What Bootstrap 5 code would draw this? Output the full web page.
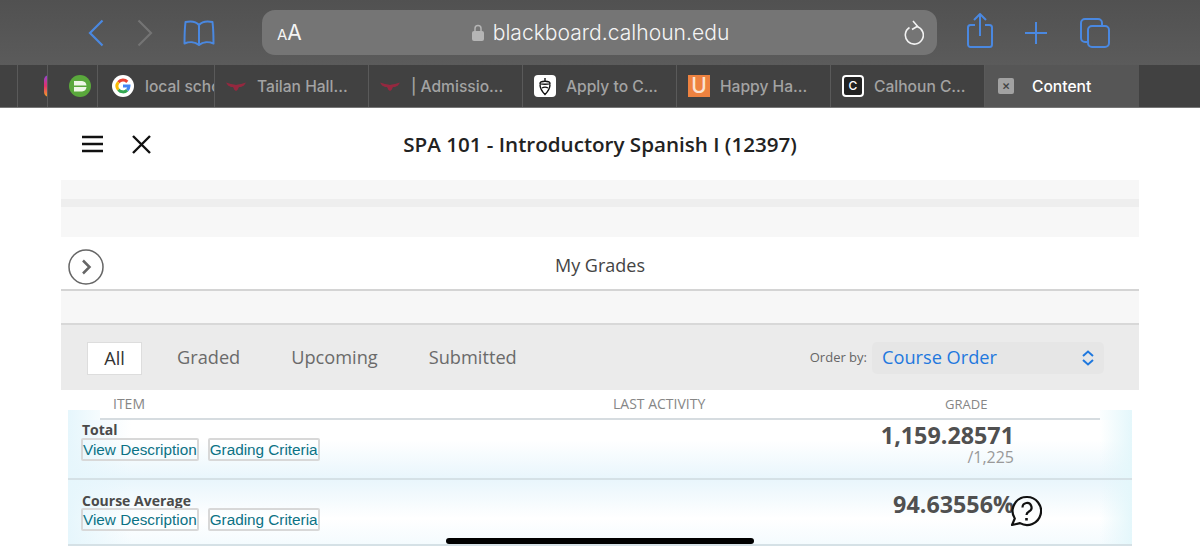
<!DOCTYPE html>
<html lang="en">

<head>
    <meta charset="UTF-8" />
    <meta name="viewport" content="width=device-width, initial-scale=1.0" />
    <title>My Grades</title>
    <link rel="stylesheet" href="https://cdn.jsdelivr.net/npm/bootstrap@5.3.0/dist/css/bootstrap.min.css" />
    <style>
        html, body {
            height: 555px;
            overflow: hidden;
        }

        body {
            position: relative;
            background: #fff;
            font-family: "Open Sans", sans-serif;
            color: #444;
        }

        /* safari chrome */
        .top-bar {
            height: 65px;
            padding-left: 88px;
            background: linear-gradient(#515151, #5b5b5b);
            font-family: Inter, Roboto, sans-serif;
        }

        .chev-icon { width: 16px; height: 28px; }
        .chev-next { margin-left: 33px; }
        .book-icon { width: 32px; height: 26px; margin-left: 30px; }
        .share-icon { width: 26px; height: 37px; margin-left: 30px; margin-bottom: 5px; }
        .plus-icon { width: 22px; height: 22px; margin-left: 32px; }
        .copies-icon { width: 30px; height: 30px; margin-left: 33px; }

        .addr-pill {
            width: 675px;
            height: 45px;
            margin-left: 47px;
            padding: 1px 13px 0 15px;
            border-radius: 13px;
            background: #757575;
            color: #f4f4f4;
        }

        .addr-side { flex: 1 1 0; }
        .aa-small { font-size: 15px; }
        .aa-big { font-size: 21px; }
        .domain-text { font-size: 21.1px; font-weight: 300; margin-left: 1px; }

        .tab-strip {
            height: 43px;
            padding-left: 17px;
            background: #414141;
            border-bottom: 1px solid #777;
            font-family: Inter, Roboto, sans-serif;
            font-size: 15.6px;
            font-weight: 500;
            color: #a3a3a3;
        }

        .tab-item {
            width: 154px;
            height: 42px;
            padding-left: 11px;
            gap: 10px;
            border-right: 1px solid #5a5a5a;
            white-space: nowrap;
            overflow: hidden;
        }

        .tab-item span { padding-top: 1px; }
        .tab-insta { width: 31px; padding-left: 26px; border-left: 1px solid #5a5a5a; }
        .tab-pin { width: 50px; padding-left: 21px; }
        .tab-google { width: 117px; padding-left: 14px; gap: 11px; }
        .tab-on { background: #565656; color: #fff; border-right: 0; padding-left: 13px; gap: 18px; }

        .fav-icon { width: 22px; height: 22px; flex: none; }
        .fav-wide { width: 20px; margin-right: 1px; }

        .fav-u {
            background: #ee8240;
            color: #fbe3d2;
            font-size: 21px;
            line-height: 22px;
            text-align: center;
        }

        .fav-c {
            background: #222;
            border: 2px solid #fff;
            border-radius: 4px;
            color: #fff;
            font-size: 12px;
            line-height: 18px;
            text-align: center;
        }

        .fav-x {
            width: 16px;
            height: 16px;
            background: #a2a2a2;
            border-radius: 2px;
            color: #444;
            font-size: 13px;
            line-height: 15px;
            text-align: center;
        }

        /* blackboard page */
        .head-row {
            height: 72px;
            padding-left: 82px;
        }

        .burger-icon { width: 21px; height: 18px; }
        .close-icon { width: 19px; height: 19px; margin-left: 29px; }

        .course-title {
            flex: 1;
            margin: 0 0 0 -151px;
            font-size: 20.6px;
            font-weight: 600;
            color: #222;
            text-align: center;
        }

        .page-col { margin: 0 61px; }

        .grey-block {
            height: 57px;
            padding-top: 19px;
            background: #f7f7f7;
        }

        .grey-band { height: 8px; background: #eee; }

        .title-row {
            height: 54px;
            padding-left: 7px;
            border-bottom: 2px solid #d4d4d4;
        }

        .round-next { width: 36px; height: 36px; flex: none; margin-top: 8px; }
        .round-spacer { width: 43px; }

        .page-name {
            flex: 1;
            padding-top: 5px;
            font-size: 18px;
            color: #444;
            text-align: center;
        }

        .spacer-strip {
            height: 34px;
            background: #f7f7f7;
            border-bottom: 2px solid #d8d8d8;
        }

        .filter-bar {
            height: 65px;
            padding: 1px 35px 0 26px;
            background: #ebebeb;
            font-size: 18.2px;
            color: #6a6a6a;
        }

        .filter-on {
            width: 55px;
            height: 33px;
            margin-right: 35px;
            background: #fff;
            border: 1px solid #ddd;
            color: #333;
            text-align: center;
            line-height: 30px;
        }

        .filter-link { margin-right: 51px; }
        .order-label { font-size: 13px; color: #666; margin-right: 5px; }

        .order-box {
            width: 232px;
            height: 32px;
            padding: 0 9px 0 10px;
            border-radius: 5px;
            background: #e6e6e6;
            color: #1f78de;
        }

        .order-arrows { width: 14px; height: 16px; }

        .grade-panel {
            display: flow-root;
            margin: 20px 7px 0;
            border-bottom: 2px solid #d5e1e6;
            background: linear-gradient(90deg, #e6f6fc, #fbfeff 4%, #fbfeff 97%, #e4f7fb);
        }

        .grade-head {
            height: 30px;
            margin: -20px 32px 0;
            background: #fff;
            border-bottom: 2px solid #d6dce0;
            font-size: 14px;
            line-height: 20px;
            color: #868686;
        }

        .col-item { width: 513px; padding-left: 13px; }
        .col-activity { width: 332px; }
        .col-grade { width: 42px; font-size: 13px; }

        .grade-row { padding-left: 14px; }

        .row-total {
            height: 60px;
            padding-top: 2px;
            border-bottom: 2px solid #d5e1e6;
            background:
                linear-gradient(90deg, #e6f6fc, rgba(255, 255, 255, 0) 6%, rgba(255, 255, 255, 0) 97%, #e4f7fb),
                linear-gradient(#fff 35%, #e9f6fc);
        }

        .row-average {
            height: 64px;
            padding-top: 13px;
            background:
                linear-gradient(90deg, #e6f6fc, rgba(255, 255, 255, 0) 6%, rgba(255, 255, 255, 0) 97%, #e4f7fb),
                linear-gradient(#e9f6fc, #fff 60%, #f4fbfe);
        }

        .grade-name {
            font-size: 14px;
            font-weight: 700;
            line-height: 16px;
            color: #4a4a4a;
        }

        .row-average .grade-name { line-height: 15px; }

        .grade-links { gap: 10px; }

        .grade-link {
            border: 2px solid #d8d8d8;
            border-radius: 2px;
            font-family: "Liberation Sans", sans-serif;
            font-size: 15.3px;
            line-height: 19px;
            color: #0b7285;
            text-decoration: none;
            margin-left: -1px;
        }

        .score-block { width: 150px; margin-right: 118px; text-align: right; }
        .row-average .score-block { margin-top: -2px; }
        .score-value { font-size: 23.3px; font-weight: 700; line-height: 26px; white-space: nowrap; color: #505050; }
        .score-out { font-size: 16px; line-height: 18px; color: #999; }

        /* floating on top of the page */
        .help-bubble {
            position: absolute;
            left: 1010px;
            top: 495px;
            width: 32px;
            height: 32px;
        }

        .home-bar {
            position: absolute;
            left: 446px;
            top: 538px;
            width: 308px;
            height: 6px;
            border-radius: 3px;
            background: #000;
        }
    </style>
</head>

<body>
    <!-- Browser toolbar -->
    <div class="top-bar d-flex align-items-center">
        <svg class="chev-icon" viewBox="0 0 16 28" fill="none" stroke="#4a88e0" stroke-width="2.2"><path d="M14.5 1.5 2 14l12.5 12.5" /></svg>
        <svg class="chev-icon chev-next" viewBox="0 0 16 28" fill="none" stroke="#747474" stroke-width="2.2"><path d="M1.5 1.5 14 14 1.5 26.5" /></svg>
        <svg class="book-icon" viewBox="0 0 32 26" fill="none" stroke="#4a88e0" stroke-width="2" stroke-linejoin="round"><path d="M16 5C13 1.500 7 1 2.500 2 1.800 8 1.500 16 1.500 23.500 6 21.500 12 21.500 16 25 20 21.500 26 21.500 30.500 23.500 30.500 16 30.200 8 29.500 2 25 1 19 1.500 16 5ZM16 5V25" /></svg>

        <div class="addr-pill d-flex align-items-center">
            <div class="addr-side"><span class="aa-small">A</span><span class="aa-big">A</span></div>
            <div class="d-flex align-items-center gap-2">
                <svg width="12" height="17" viewBox="0 0 12 17"><path d="M3 7V4.500a3 3 0 0 1 6 0V7" fill="none" stroke="#b5b5b5" stroke-width="1.500" /><rect y="7" width="12" height="10" rx="2" fill="#b5b5b5" /></svg>
                <span class="domain-text">blackboard.calhoun.edu</span>
            </div>
            <div class="addr-side d-flex justify-content-end">
                <svg width="20" height="26" viewBox="0 0 20 26" fill="none" stroke="#f2f2f2" stroke-width="1.600"><path d="M5.500 7.500A9 9 0 1 0 13 6.500" /><path d="M9 1l4.500 5.200L8 9.500" /></svg>
            </div>
        </div>

        <svg class="share-icon" viewBox="0 0 26 37" fill="none" stroke="#4a88e0" stroke-width="2" stroke-linejoin="round"><path d="M8 13H3.500A2.500 2.500 0 0 0 1 15.500v17A2.500 2.500 0 0 0 3.500 35h19a2.500 2.500 0 0 0 2.500-2.500v-17a2.500 2.500 0 0 0-2.500-2.500H18M13 24V2M7 8l6-6 6 6" /></svg>
        <svg class="plus-icon" viewBox="0 0 22 22" stroke="#4a88e0" stroke-width="2"><path d="M11 0v22M0 11h22" /></svg>
        <svg class="copies-icon" viewBox="0 0 30 30" fill="none" stroke="#4a88e0" stroke-width="2"><rect x="8" y="8" width="21" height="21" rx="4" /><path d="M8 24H5a4 4 0 0 1-4-4V5a4 4 0 0 1 4-4h13a4 4 0 0 1 4 4v3" /></svg>
    </div>

    <!-- Tab strip -->
    <div class="tab-strip d-flex">
        <div class="tab-item tab-insta d-flex align-items-center">
            <svg class="fav-icon" viewBox="0 0 22 22"><defs><linearGradient id="instaFill" x1="0" y1="0" x2="0" y2="1"><stop offset="0" stop-color="#8f45d8" /><stop offset="0.5" stop-color="#e1306c" /><stop offset="1" stop-color="#f5a623" /></linearGradient></defs><rect width="22" height="22" rx="5" fill="url(#instaFill)" /></svg>
        </div>
        <div class="tab-item tab-pin d-flex align-items-center">
            <svg class="fav-icon" viewBox="0 0 22 22"><circle cx="11" cy="11" r="11" fill="#5aa83c" /><path d="M5 6h8a5 5 0 0 1 4.500 4.500H5ZM5 12h12.500A5 5 0 0 1 13 16.500H5Z" fill="#eef6e6" /></svg>
        </div>
        <div class="tab-item tab-google d-flex align-items-center">
            <svg class="fav-icon" viewBox="0 0 22 22"><circle cx="11" cy="11" r="11" fill="#fff" /><g fill="none" stroke-width="3"><path d="M15.300 6.900A6 6 0 0 0 6.400 7.200" stroke="#ea4335" /><path d="M6.400 7.200a6 6 0 0 0 0 7.600" stroke="#fbbc05" /><path d="M6.400 14.800a6 6 0 0 0 8.800.3" stroke="#34a853" /><path d="M15.200 15.100A6 6 0 0 0 17 11h-6" stroke="#4285f4" /></g></svg>
            <span>local school</span>
        </div>
        <div class="tab-item d-flex align-items-center">
            <svg class="fav-icon fav-wide" viewBox="0 0 20 22"><path d="M0 7.500l5 1.500 3 .5 2 .5 2-.5 3-.5 5-1.500-2 3-3 1.500-2 0-1.500 3-1.500 1-1.500-1-1.500-3-2 0-3-1.500Z" fill="#94283f" /></svg>
            <span>Tailan Hall...</span>
        </div>
        <div class="tab-item d-flex align-items-center">
            <svg class="fav-icon fav-wide" viewBox="0 0 20 22"><path d="M0 7.500l5 1.500 3 .5 2 .5 2-.5 3-.5 5-1.500-2 3-3 1.500-2 0-1.500 3-1.500 1-1.500-1-1.500-3-2 0-3-1.500Z" fill="#94283f" /></svg>
            <span>| Admissio...</span>
        </div>
        <div class="tab-item d-flex align-items-center">
            <svg class="fav-icon" viewBox="0 0 22 22"><rect width="22" height="22" rx="4" fill="#fff" /><path d="M6 8.500c0-3 10-3 10 0 0 1-10 1-10 0ZM6 9.500c0 4 2.500 7.500 5 10 2.500-2.500 5-6 5-10M8 13c2-1.200 4-1.200 6 0M11 5.500V3" fill="none" stroke="#111" stroke-width="1.400" /></svg>
            <span>Apply to C...</span>
        </div>
        <div class="tab-item d-flex align-items-center">
            <div class="fav-icon fav-u">U</div>
            <span>Happy Ha...</span>
        </div>
        <div class="tab-item d-flex align-items-center">
            <div class="fav-icon fav-c">C</div>
            <span>Calhoun C...</span>
        </div>
        <div class="tab-item tab-on d-flex align-items-center">
            <div class="fav-x">×</div>
            <span>Content</span>
        </div>
    </div>

    <!-- Course header -->
    <div class="head-row d-flex align-items-center">
        <svg class="burger-icon" viewBox="0 0 21 18" stroke="#111" stroke-width="2.500"><path d="M0 2h21M0 9h21M0 16h21" /></svg>
        <svg class="close-icon" viewBox="0 0 19 19" stroke="#111" stroke-width="2.400"><path d="M1 1l17 17M18 1 1 18" /></svg>
        <h1 class="course-title">SPA 101 - Introductory Spanish I (12397)</h1>
    </div>

    <div class="page-col">
        <div class="grey-block">
            <div class="grey-band"></div>
        </div>

        <div class="title-row d-flex align-items-center">
            <svg class="round-next" viewBox="0 0 36 36" fill="none"><circle cx="18" cy="18" r="17" stroke="#666" stroke-width="1.500" /><path d="M15 11.500 21.500 18 15 24.500" stroke="#666" stroke-width="2.500" /></svg>
            <div class="page-name">My Grades</div>
            <div class="round-spacer"></div>
        </div>

        <div class="spacer-strip"></div>

        <div class="filter-bar d-flex align-items-center">
            <div class="filter-on">All</div>
            <div class="filter-link">Graded</div>
            <div class="filter-link">Upcoming</div>
            <div class="filter-link">Submitted</div>
            <div class="order-label ms-auto">Order by:</div>
            <div class="order-box d-flex align-items-center justify-content-between">
                <span>Course Order</span>
                <svg class="order-arrows" viewBox="0 0 14 16" fill="none" stroke="#1f78de" stroke-width="2"><path d="M2 6 7 1.500 12 6M2 10l5 4.500L12 10" /></svg>
            </div>
        </div>

        <div class="grade-panel">
            <div class="grade-head d-flex align-items-center">
                <div class="col-item">ITEM</div>
                <div class="col-activity">LAST ACTIVITY</div>
                <div class="col-grade">GRADE</div>
            </div>

            <div class="grade-row row-total d-flex justify-content-between">
                <div>
                    <div class="grade-name">Total</div>
                    <div class="grade-links d-flex">
                        <a class="grade-link" href="#">View Description</a>
                        <a class="grade-link" href="#">Grading Criteria</a>
                    </div>
                </div>
                <div class="score-block">
                    <div class="score-value">1,159.28571</div>
                    <div class="score-out">/1,225</div>
                </div>
            </div>

            <div class="grade-row row-average d-flex justify-content-between">
                <div>
                    <div class="grade-name">Course Average</div>
                    <div class="grade-links d-flex">
                        <a class="grade-link" href="#">View Description</a>
                        <a class="grade-link" href="#">Grading Criteria</a>
                    </div>
                </div>
                <div class="score-block">
                    <div class="score-value">94.63556%</div>
                </div>
            </div>
        </div>
    </div>

    <svg class="help-bubble" viewBox="0 0 32 32" fill="none" stroke="#111" stroke-width="2.200" stroke-linejoin="round"><path d="M17 2a14 14 0 1 1-7 26.100L2 30l2.800-6.500A14 14 0 0 1 17 2Z" fill="#fff" fill-opacity="0.3" /><path d="M12.500 12.500a4.500 4.500 0 1 1 6.500 4c-1.800 1-2.500 1.800-2.500 3.500" /><path d="M16.500 23v2.500" stroke-width="2.600" /></svg>

    <div class="home-bar"></div>

    <script src="https://cdn.jsdelivr.net/npm/bootstrap@5.3.0/dist/js/bootstrap.bundle.min.js"></script>
</body>

</html>
